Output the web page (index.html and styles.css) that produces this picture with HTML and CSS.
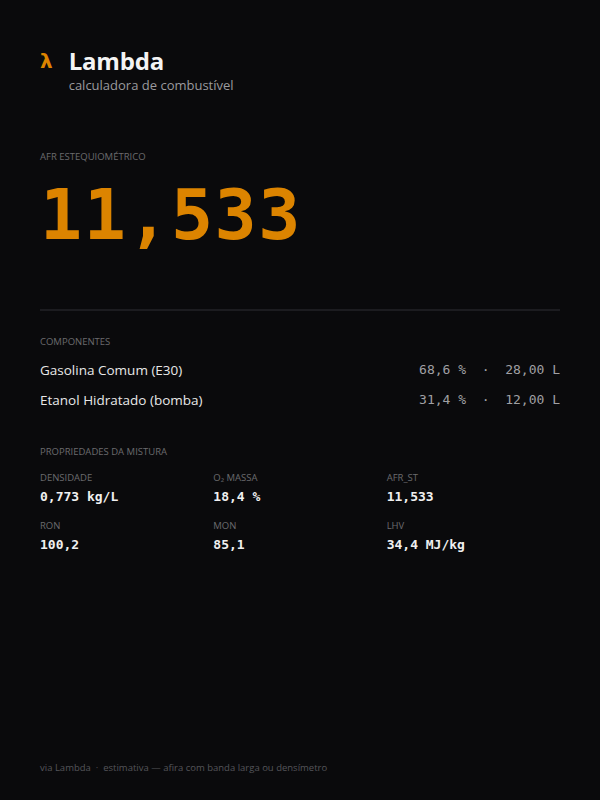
FILE: index.html
```html
<!DOCTYPE html>
<html lang="pt">
<head>
  <meta charset="UTF-8">
  <title>Lambda — calculadora de combustível</title>
  <link rel="stylesheet" href="styles.css">
</head>
<body>
  <div class="page">
    <header class="brand">
      <span class="brand-mark">λ</span>
      <div>
        <h1>Lambda</h1>
        <p class="sub">calculadora de combustível</p>
      </div>
    </header>

    <section class="hero">
      <div class="label">AFR estequiométrico</div>
      <div class="big">11,533</div>
    </section>

    <hr class="rule">

    <section class="block">
      <div class="label">Componentes</div>
      <div class="comps">
        <div class="comp">
          <span>Gasolina Comum (E30)</span>
          <span class="mono">68,6 %  ·  28,00 L</span>
        </div>
        <div class="comp">
          <span>Etanol Hidratado (bomba)</span>
          <span class="mono">31,4 %  ·  12,00 L</span>
        </div>
      </div>
    </section>

    <section class="block props-block">
      <div class="label">Propriedades da mistura</div>
      <div class="props">
        <div><div class="label">Densidade</div><div class="val">0,773 kg/L</div></div>
        <div><div class="label">O₂ massa</div><div class="val">18,4 %</div></div>
        <div><div class="label">AFR_ST</div><div class="val">11,533</div></div>
        <div><div class="label">RON</div><div class="val">100,2</div></div>
        <div><div class="label">MON</div><div class="val">85,1</div></div>
        <div><div class="label">LHV</div><div class="val">34,4 MJ/kg</div></div>
      </div>
    </section>

    <footer class="foot">via Lambda &nbsp;·&nbsp; estimativa — afira com banda larga ou densímetro</footer>
  </div>
</body>
</html>
```

FILE: styles.css
```css
:root {
  --bg: #0a0a0c;
  --text: #ececec;
  --muted: #8a8a8e;
  --dim: #6a6a6e;
  --line: #1c1c20;
  --accent: #dc8400;
}
* { box-sizing: border-box; margin: 0; padding: 0; }
html, body { height: 100%; }
body {
  background: var(--bg);
  color: var(--text);
  font-family: "Open Sans", "Noto Sans", sans-serif;
}
.page {
  display: flex;
  flex-direction: column;
  min-height: 800px;
  padding: 45px 40px 26px;
}
.brand {
  display: flex;
  gap: 16px;
  align-items: flex-start;
}
.brand-mark {
  color: var(--accent);
  font-family: "DejaVu Sans", sans-serif;
  font-weight: bold;
  font-size: 20px;
  line-height: 32px;
}
.brand h1 {
  font-size: 24px;
  font-weight: 700;
  line-height: 32px;
  color: #f4f4f4;
  letter-spacing: -0.2px;
}
.sub {
  font-size: 13px;
  color: #9a9a9e;
  margin-top: -1px;
}
.label {
  font-size: 9.5px;
  text-transform: uppercase;
  color: var(--dim);
}
.hero { margin-top: 56px; }
.big {
  font-family: "DejaVu Sans Mono", monospace;
  font-weight: bold;
  font-size: 70px;
  line-height: 1;
  color: var(--accent);
  margin-top: 17px;
  letter-spacing: 1.5px;
}
.rule {
  border: none;
  border-top: 2px solid var(--line);
  margin-top: 59px;
}
.block { margin-top: 24px; }
.comps { margin-top: 7px; }
.comp {
  display: flex;
  justify-content: space-between;
  font-size: 13.5px;
  line-height: 30px;
  color: #e8e8e8;
}
.mono {
  font-family: "DejaVu Sans Mono", monospace;
  font-size: 13px;
  color: #a0a0a4;
  white-space: pre;
}
.props-block { margin-top: 30px; }
.props {
  display: grid;
  grid-template-columns: repeat(3, 1fr);
  row-gap: 15px;
  margin-top: 13px;
}
.val {
  font-family: "DejaVu Sans Mono", monospace;
  font-weight: bold;
  font-size: 13px;
  color: #f0f0f0;
  margin-top: 5px;
}
.foot {
  margin-top: auto;
  font-size: 9.5px;
  color: #55555a;
}
```
